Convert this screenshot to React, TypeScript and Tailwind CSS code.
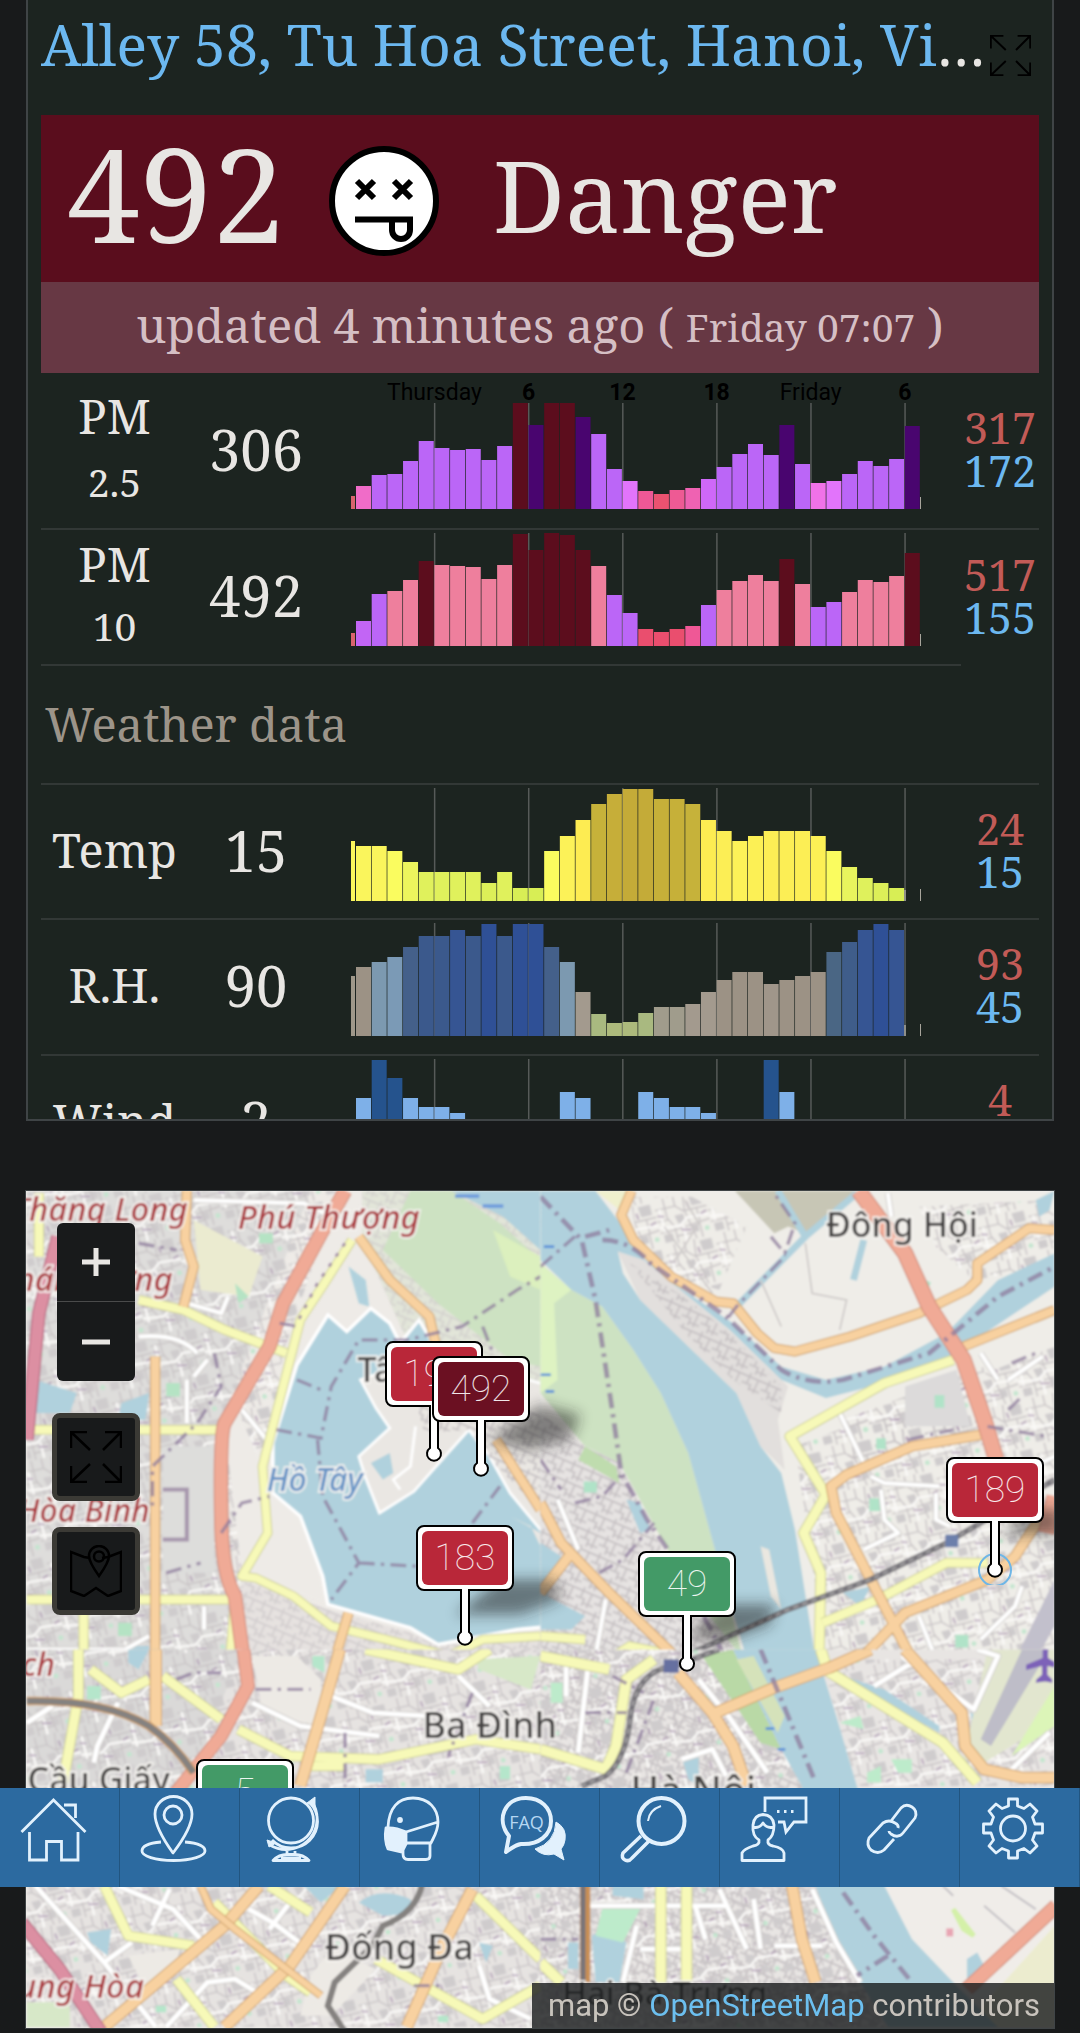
import type { ReactNode } from "react";

type Bar = [number, string];

const PU = "#bb66f7";
const IN = "#49056f";
const MA = "#5c0d1d";
const PI = "#ee7f9d";

const pm25: Bar[] = [
  [23, "#f06cc8"], [34, PU], [35, PU], [48, PU], [68, PU], [61, PU], [59, PU], [60, PU], [49, PU], [63, PU],
  [106, MA], [84, IN], [106, MA], [106, MA], [92, IN], [75, PU], [40, PU], [28, "#e274fb"], [18, "#ef5896"], [15, "#eb5270"],
  [19, "#ee5a94"], [21, "#ef62b2"], [30, "#cf68f8"], [42, PU], [55, PU], [65, PU], [54, PU], [84, IN], [45, PU], [26, "#f072e8"],
  [28, "#e274fb"], [35, PU], [48, PU], [43, PU], [50, PU], [83, IN],
];
const pm10: Bar[] = [
  [25, "#c265f5"], [52, PU], [55, PI], [66, PI], [85, MA], [81, PI], [80, PI], [79, PI], [67, PI], [81, PI],
  [112, MA], [96, MA], [113, MA], [111, MA], [96, MA], [80, PI], [51, PU], [33, PU], [17, "#ea4e6e"], [14, "#ea4e6e"],
  [17, "#ea4e6e"], [20, "#ef5896"], [41, PU], [56, PI], [65, PI], [71, PI], [65, PI], [87, MA], [62, PI], [39, PU],
  [44, PU], [54, PI], [66, PI], [64, PI], [70, PI], [93, MA],
];
const temp: Bar[] = [
  [55, "#faf55c"], [55, "#faf55c"], [50, "#fafc5f"], [39, "#ecf55d"], [29, "#e0f15c"], [29, "#e0f15c"], [29, "#e0f15c"], [29, "#e0f15c"], [18, "#dcef58"], [29, "#e0f15c"],
  [13, "#d8ee55"], [13, "#d8ee55"], [50, "#fafc5f"], [65, "#fcf258"], [81, "#fdec52"], [97, "#c6b23a"], [107, "#c6ae39"], [112, "#c4ab38"], [112, "#c4ab38"], [102, "#c6b039"],
  [102, "#c6b039"], [97, "#c6b23a"], [81, "#fdec52"], [70, "#fcee55"], [60, "#fcf258"], [65, "#fcf055"], [70, "#fcee55"], [70, "#fcee55"], [70, "#fcee55"], [65, "#fcf055"],
  [50, "#fafc5f"], [34, "#e8f45d"], [23, "#dff15c"], [18, "#dcef58"], [13, "#d8ee55"],
];
const rh: Bar[] = [
  [69, "#9c9285"], [74, "#7c99b0"], [79, "#7b9ab6"], [89, "#44608a"], [100, "#3b598c"], [100, "#3b598c"], [106, "#365593"], [100, "#3b598c"], [112, "#2f5096"], [100, "#3b598c"],
  [112, "#2f5096"], [112, "#2f5096"], [89, "#44608a"], [74, "#7c99b0"], [44, "#a39a8e"], [22, "#a9b980"], [13, "#adba7c"], [14, "#adba7c"], [23, "#a9b980"], [29, "#a09c8c"],
  [29, "#a09c8c"], [32, "#a39a8e"], [44, "#a39a8e"], [56, "#9c9285"], [64, "#9c9285"], [64, "#9c9285"], [52, "#a0968a"], [56, "#9c9285"], [60, "#9c9285"], [64, "#9c9285"],
  [84, "#4a6684"], [94, "#3f5d8a"], [106, "#365593"], [112, "#2f5096"], [106, "#365593"],
];
const LB = "#7eb0e8";
const DB = "#25538d";
const N: Bar = [0, LB];
const wind: Bar[] = [
  [74, LB], [112, DB], [94, DB], [74, LB], [65, LB], [65, LB], [59, LB], N, N, N, N, N, N, [80, LB], [74, LB], N, N, N,
  [80, LB], [74, LB], [65, LB], [65, LB], [59, LB], N, N, N, [112, DB], [80, LB],
];

const axis: [number, string][] = [[5, "Thursday"], [11, "6"], [17, "12"], [23, "18"], [29, "Friday"], [35, "6"]];

function Chart({ bars, lead, labels = false }: { bars: Bar[]; lead?: Bar; labels?: boolean }) {
  const h = labels ? 133 : 113;
  const top = labels ? 27 : 0;
  return (
    <svg viewBox={`0 0 570 ${h}`} className="block h-auto w-full" aria-hidden="true">
      {axis.map(([k, t]) => (
        <g key={k}>
          <rect x={4.5 + k * 15.68} y={top} width="1.5" height={h - top} fill="#565a58" />
          {labels && (
            <text
              x={5 + k * 15.68}
              y="24"
              textAnchor="middle"
              className="font-['Roboto'] text-[23px]"
              fontWeight={t.length > 2 ? 400 : 700}
              fill="#000"
            >
              {t}
            </text>
          )}
        </g>
      ))}
      {lead && <rect x="0" y={h - lead[0]} width="4" height={lead[0]} fill={lead[1]} />}
      {bars.map(([v, c], i) => (
        <rect key={i} x={5 + i * 15.68} y={h - v} width="15" height={v} fill={c} />
      ))}
      <rect x="569" y={h - 12} width="1" height="12" fill="#a8a59c" />
      {bars.length === 35 && <rect x="553" y={h - 11} width="2" height="11" fill="#8f8f89" />}
    </svg>
  );
}

type RowProps = {
  label: string;
  sub?: string;
  value: string;
  bars: Bar[];
  lead?: Bar;
  max: string;
  min: string;
  height: string;
  labels?: boolean;
  shortRule?: boolean;
};

function Row({ label, sub, value, bars, lead, max, min, height, labels, shortRule }: RowProps) {
  const b = "border-b-2 border-[#323836]";
  return (
    <tr className={height}>
      <th scope="row" className={`${b} px-0 pt-0 pb-1 text-center align-middle text-[47px] leading-[62px] font-normal`}>
        {label}
        {sub && <div className={labels ? "pt-1 text-[39px]" : "text-[39px]"}>{sub}</div>}
      </th>
      <td className={`${b} px-0 pt-0 pb-1 text-center align-middle text-[56px]`}>{value}</td>
      <td className={`${b} pt-[3px] pr-10 pb-0 pl-[27px] align-top`}>
        <Chart bars={bars} lead={lead} labels={labels} />
      </td>
      <td className={`${shortRule ? "" : b} px-0 pt-0 pb-1 text-center align-middle text-[43px] leading-[43px]`}>
        <div className="text-[#c25b57]">{max}</div>
        <div className="text-[#6cb8f0]">{min}</div>
      </td>
    </tr>
  );
}

function ExpandIcon({ className }: { className: string }) {
  return (
    <svg viewBox="0 0 52 52" className={className} fill="none" stroke="#000" strokeWidth="2.5" aria-hidden="true">
      <path d="M1 17V1H17M1 1L20 19M35 1H51V17M51 1L33 19M1 35V51H17M1 51L20 33M35 51H51V35M51 51L33 33" />
    </svg>
  );
}

function Face() {
  return (
    <svg viewBox="0 0 110 110" className="mt-1 size-[110px] shrink-0" aria-label="Face with crossed eyes" role="img">
      <circle cx="55" cy="55" r="52" fill="#fff" stroke="#000" strokeWidth="6" />
      <g fill="none" stroke="#000" strokeWidth="6">
        <path d="M28 35L45 52M45 35L28 52M65 35L82 52M82 35L65 52" />
        <path d="M26 73.500H81V84A9 9 0 0 1 63 84V75" />
      </g>
    </svg>
  );
}

/* ---------- Map drawing ---------- */

type Kind = "orange" | "yellow" | "red" | "pink" | "white";

const roadColors: Record<Kind, [string, string]> = {
  orange: ["#cfa36b", "#f8d1a0"],
  yellow: ["#cfd199", "#f7f9b8"],
  red: ["#d08a78", "#f0aa96"],
  pink: ["#b0607a", "#dc8fa2"],
  white: ["#d2cfcc", "#ffffff"],
};

function Roads({ kind, w, d }: { kind: Kind; w: number; d: string }) {
  const [edge, fill] = roadColors[kind];
  return (
    <g fill="none" strokeLinejoin="round" strokeLinecap="butt">
      <path d={d} stroke={edge} strokeWidth={w + 6} />
      <path d={d} stroke={fill} strokeWidth={w} />
    </g>
  );
}

function Boundary({ d, w = 10 }: { d: string; w?: number }) {
  return <path d={d} fill="none" stroke="#8d7b9c" strokeOpacity="0.75" strokeWidth={w} strokeDasharray="46 18 10 18" />;
}

function Rail({ d }: { d: string }) {
  return (
    <g fill="none">
      <path d={d} stroke="#77757a" strokeWidth="16" />
      <path d={d} stroke="#a9a7a8" strokeWidth="5" strokeDasharray="16 12" />
    </g>
  );
}

type PlaceProps = { x: number; y: number; size: number; fill?: string; italic?: boolean; end?: boolean; children: ReactNode };

function Place({ x, y, size, fill = "#444242", italic = false, end = false, children }: PlaceProps) {
  return (
    <text
      x={x}
      y={y}
      fontSize={size}
      fill={fill}
      fontStyle={italic ? "italic" : "normal"}
      fontWeight="500"
      textAnchor={end ? "end" : "start"}
      stroke="#f6f3f0"
      strokeOpacity="0.85"
      strokeWidth="4"
      paintOrder="stroke"
      className="font-['Noto_Sans']"
    >
      {children}
    </text>
  );
}

const water = "#b0d1dd";

function MapDrawing() {
  return (
    <svg viewBox="25 1191 1030 838" preserveAspectRatio="xMinYMin slice" className="absolute inset-0 h-full w-full" aria-hidden="true">
      <defs>
        <pattern id="streets" width="150" height="140" patternUnits="userSpaceOnUse" patternTransform="rotate(-14)">
          <path d="M52 58H78V84H58ZM104 8H140V40H108ZM8 108H34V132H8ZM92 98H112V120H92Z" fill="#cfcccd" />
          <path d="M0 30H60L80 50H150M30 0V60L45 90V140M90 0L84 50L100 140M0 100H45L150 90M120 50V90M60 30V0M0 66H34M118 92V140M45 120H98" stroke="#c8c3c5" strokeWidth="4" fill="none" />
          <path d="M0 84L60 92L86 72L150 76M70 92V140M14 30V100" stroke="#fbfaf8" strokeWidth="7" fill="none" />
          <path d="M4 48L22 54M62 104L90 110M128 70L146 64M96 26L98 44" stroke="#a791ad" strokeWidth="6" strokeOpacity="0.7" />
          <circle cx="136" cy="116" r="7" fill="#c3e6cf" />
        </pattern>
        <pattern id="dense" width="60" height="56" patternUnits="userSpaceOnUse" patternTransform="rotate(24)">
          <path d="M0 12H60M0 34H28V56M16 0V34M44 12V56M28 46H60" stroke="#c6c1c3" strokeWidth="5" fill="none" />
        </pattern>
        <filter id="soft" x="-20%" y="-20%" width="140%" height="140%">
          <feGaussianBlur stdDeviation="1" />
        </filter>
        <filter id="shade" x="-50%" y="-100%" width="200%" height="300%">
          <feGaussianBlur stdDeviation="7" />
        </filter>
        <clipPath id="north"><rect x="0" y="30" width="1569" height="1412" /></clipPath>
        <clipPath id="south"><rect x="0" y="0" width="1569" height="1149" /></clipPath>
      </defs>

      <rect x="0" y="1180" width="1080" height="860" fill="#eeebe7" />
      <g filter="url(#soft)">
        {/* north west */}
        <g transform="translate(0 1180) scale(0.3444 0.3333)" clipPath="url(#north)">
          <path d="M75 32H900L640 730L700 1440H75Z" fill="#dedddb" />
          <path d="M620 32L980 32L820 520L780 800L700 1200L960 1440H75V32Z" fill="url(#streets)" />
          <path d="M690 700L780 900L900 1010L940 1270L700 1180L650 740Z" fill="#eeebe7" />
          <path d="M470 800H620V1180H470Z" fill="#dddddb" />
          <path d="M560 120L760 230L720 350L580 330Z" fill="#ebebd0" />
          <path d="M1050 32H1568V760H1300L1050 180Z" fill="#e2e5d9" />
          <path d="M1050 32H1568V760H1300L1050 180Z" fill="url(#dense)" opacity="0.5" />
          <path d="M1190 32H1310L1450 130L1568 240V560L1480 540L1270 370L1110 210Z" fill="#cde2c2" />
          <path d="M1430 150L1568 230V330L1480 290Z" fill="#dcf0be" />
          <path d="M1310 32H1568V210L1460 110Z" fill={water} />
          <path d="M100 600L220 640L200 700H100ZM350 670L430 640L420 720H340ZM370 1400H430V1440H370ZM1010 260L1060 300L1070 380L1040 370Z" fill={water} />
          <path d="M680 310L720 350L690 370ZM480 610H520V650H480ZM340 1330H380V1370H340ZM750 160H790V190H750Z" fill="#b5e3c4" />
          <path d="M950 405L1005 455L1075 385L1130 430L1160 490L1215 420L1250 480L1200 620L1600 660V1340L1500 1350L1270 1395L1190 1345L950 1275L935 1190L870 1010L790 940V790L860 555Z" fill={water} stroke="#fff" strokeWidth="10" />
          <path d="M1045 600L1260 520L1600 620V1090L1480 940L1420 830L1360 750L1290 830L1200 935L1100 1000L1060 895L1040 830L1130 745L1090 685Z" fill="#eae7e3" stroke="#fff" strokeWidth="8" />
          <path d="M1200 640L1568 700V990L1440 860L1360 750L1230 760Z" fill="url(#dense)" />
          <path d="M1075 850L1130 820L1140 880L1110 900Z" fill={water} />
          <path d="M1205 740L1190 860L1140 900L1160 930" fill="none" stroke="#fff" strokeWidth="8" />
          <path d="M1480 1010L1540 1040L1568 1100V1060Z" fill="#eae7e3" />
          <path d="M700 1200L950 1290L1190 1360L1270 1400L1568 1360V1440H700Z" fill="#e6e2e0" />
          <path d="M700 1200L950 1290L1190 1360L1270 1400L1568 1360V1440H700Z" fill="url(#dense)" opacity="0.6" />
          <Roads kind="white" w={12} d="M540 370L640 400L660 350M400 470Q520 460 570 520M540 600V730M700 690L780 790M560 60L880 70L1000 130M600 540L560 590M590 1280V1350M75 1410H360L430 1370" />
          <Roads kind="yellow" w={24} d="M400 360L530 390L650 450L830 520M75 750H640M75 1260H680M240 1300V1440M110 40V230" />
          <Roads kind="yellow" w={22} d="M1020 180L940 310L870 420L820 620L760 860L775 1060L700 1190L740 1195L850 1250L960 1340L1120 1380L1300 1430L1400 1380L1568 1370M680 1260L665 1440" />
          <path d="M1000 190L920 310L860 430" stroke="#a08aa5" strokeWidth="8" strokeDasharray="12 24" fill="none" />
          <Roads kind="orange" w={24} d="M540 32L535 180L560 260L530 380M448 530V1440M1040 170L1130 300L1245 410L1265 500M1440 780L1500 880L1568 990M1010 1300L970 1440" />
          <Roads kind="red" w={36} d="M1000 32L930 160L820 370L780 500L650 730Q636 760 640 1000Q640 1180 680 1250L705 1440" />
          <Roads kind="pink" w={34} d="M165 170L110 400L75 780" />
          <Boundary d="M810 430L860 440M800 750L930 775L960 620L1040 480L1180 480L1340 440L1500 330L1568 290M860 600L930 630M920 780L935 950L1040 1150L960 1260M1040 1150L1210 1160M400 190L510 210M480 1180L580 1150M640 1060L700 970L780 950M620 520L640 620L570 730L440 860V980M1370 1030L1450 920M1400 440L1430 520" />
          <path d="M470 930H540V1080H470" fill="none" stroke="#a797ad" strokeWidth="12" />
          <path d="M1320 48H1390M1400 78H1460" stroke="#6d9bdc" strokeWidth="10" />
        </g>

        {/* north east */}
        <g transform="translate(540 1180) scale(0.3444 0.3333)" clipPath="url(#north)">
          <path d="M0 32H1495V1440H0Z" fill="#efede8" />
          <path d="M260 50H440L600 140L520 330L380 290L280 170ZM1100 80L1495 60V260L1260 300L1150 200ZM880 720L1290 560V740L900 870Z" fill="url(#streets)" />
          <path d="M740 800L1495 500V1440H830Z" fill="url(#streets)" />
          <path d="M1060 620L1210 570L1250 740H1060Z" fill="#dcdada" />
          <path d="M0 250L90 330L180 380L270 510L350 640L430 820L510 1120L590 1440H480L370 1110L230 850L130 800L0 640Z" fill="#cde2c2" />
          <path d="M0 250L90 330L40 370L50 600L0 640Z" fill="#def3c2" />
          <path d="M0 700L130 800L230 850L310 1020L380 1160L590 1440H0Z" fill="#e6e3e2" />
          <path d="M0 700L130 800L230 850L310 1020L380 1160L590 1440H0Z" fill="url(#dense)" />
          <path d="M130 800L220 860L230 910L110 840Z" fill="#bfdcae" />
          <path d="M0 32H160L225 120L300 235L400 320L560 430L700 560L830 600L1000 560L1180 460L1330 300L1495 220V320L1190 530L1000 610L830 655L700 600L550 450L430 350L300 240L225 215L240 280L290 360L440 510L570 640L640 800L700 880L740 1050L800 1440H600L510 1120L430 820L350 640L270 510L180 380L90 330L0 240Z" fill={water} />
          <path d="M225 215L300 240L430 350L550 450L720 620L690 720L710 870L640 800L570 640L440 510L290 360Z" fill="#e2dfdd" />
          <path d="M260 250L430 360L560 470L700 620V700L560 600L430 470Z" fill="url(#dense)" />
          <path d="M640 1100L665 1110L700 1290L670 1250Z" fill="#eae7e0" />
          <path d="M0 1090L60 1130L20 1250L130 1310L90 1350H0ZM250 960L290 970L320 1050L290 1060ZM1440 60L1495 32L1480 90L1450 110ZM880 1240L960 1220L930 1280Z" fill={water} />
          <path d="M565 32H920L770 160L720 140L680 160Z" fill="#c7c6b5" />
          <path d="M160 32H260L230 90Z" fill="#eff0cd" />
          <path d="M770 170L920 40M770 170L570 380M690 32L770 170M940 180L910 300" stroke={water} strokeWidth="20" fill="none" />
          <path d="M1110 300L1130 310L1120 330ZM1150 650H1170V680H1150ZM980 780H1000V805H980ZM960 960H985V990H960ZM130 910H160V935H130ZM1210 1370H1240V1400H1210Z" fill="#b0e3c8" stroke="#b0e3c8" strokeWidth="8" />
          <path d="M360 140L500 340M420 60L460 130L400 230L380 250M770 190L790 340L890 360L870 450M640 300L700 440" stroke="#cfcbca" strokeWidth="5" fill="none" />
          <Roads kind="white" w={12} d="M870 700L940 850M960 890L1000 910L1160 920M990 930L1000 1020L1040 1060L940 1110M1150 940V1020L1190 1040M1280 520L1330 600M1360 600L1460 530M50 960L110 1110M190 1260L160 1430M1400 1220L1380 1280L1280 1380M1100 1310L1150 1440M1010 40L1020 110M1060 200L1090 260M1390 880L1495 830" />
          <Roads kind="yellow" w={26} d="M1200 540L1000 610L725 770L830 945L765 1060L815 1180L810 1440" />
          <Roads kind="yellow" w={24} d="M820 1330L980 1260L1180 1150H1300M0 1370L130 1380M200 1440L260 1400L400 1430" />
          <Roads kind="orange" w={24} d="M265 32L235 105L270 180L380 290L510 365L560 370L630 460L680 505L740 515L900 470L1100 400L1240 330L1270 300V250L1420 145L1495 150M1495 390L1230 500" />
          <Roads kind="orange" w={26} d="M1280 765L1080 800L890 885L845 920L860 1000L980 1240L1080 1440M1495 960L1430 1050L1380 1130L1300 1200L1060 1300L930 1440M0 970L60 1090L200 1240L400 1440M0 1240L90 1120" />
          <Roads kind="red" w={42} d="M925 32L1060 220L1130 380L1230 540L1290 720L1325 840M1495 950L1470 1060" />
          <Boundary w={14} d="M0 50L120 180L160 360L210 700L235 880L310 1020L370 1110L490 1340L540 1440" />
          <Boundary w={14} d="M130 170L200 150M180 180Q260 180 320 250L540 410L700 570Q780 620 880 600L1130 520L1330 350L1495 260" />
          <Boundary d="M0 260L100 170M700 240L570 380L540 420M670 170L710 220L740 130L680 40M100 970L180 950L240 880M170 1180L240 1140L330 1030M0 840L60 930M1360 690L1400 650M1370 550L1440 520M1070 780L1200 750M1300 740L1470 770" />
          <Rail d="M430 1425L720 1290L960 1200L1180 1090L1495 900" />
          <rect x="1177" y="1065" width="38" height="38" fill="#6c7fab" />
          <path d="M1495 1200L1380 1440H1440L1495 1340Z" fill="#c2c0cc" />
          <path d="M10 200H40M0 585H30M15 635H40" stroke="#5b93d8" strokeWidth="8" />
        </g>

        {/* south west */}
        <g transform="translate(0 1650) scale(0.3444 0.3333)" clipPath="url(#south)">
          <path d="M75 0H1568V1134H75Z" fill="#e6e3e1" />
          <path d="M75 0H700L560 370L300 410H75Z" fill="#dad9d8" />
          <path d="M75 0H1568V1134H75Z" fill="url(#streets)" />
          <path d="M370 920L520 900L500 980L430 1040ZM900 980L960 900L1090 960L960 1100H870ZM730 20H860L930 90V230L760 190Z" fill="#edeae5" />
          <path d="M370 0H430L400 60L370 40ZM880 710H990L930 760ZM1040 760Q1100 710 1190 750Q1200 800 1110 800ZM250 850L320 840L310 920L260 880ZM1390 880L1430 890L1410 940ZM1060 360H1110V400H1060Z" fill={water} />
          <path d="M75 1060H200V1134H75ZM1380 30L1568 20L1540 120L1390 60Z" fill="#d7e8c8" />
          <path d="M905 20H940V70L905 50ZM250 110H290V150H250ZM1450 350H1480V390H1450ZM1270 1100H1300V1120H1270ZM450 1070H480V1090H450Z" fill="#b5e6cb" />
          <Roads kind="white" w={14} d="M100 710L300 940L450 1134M300 940L380 880M75 220L150 170M340 160L280 290L270 340M730 160L870 230L1100 260M960 140L1080 190L1240 200M1330 80L1420 170M340 710L500 780L580 870M490 720L440 830M720 780L790 820L880 890M840 760L780 840M480 1134L600 1000L680 990L760 1040M1390 950L1420 1050L1540 1110" />
          <Roads kind="yellow" w={26} d="M225 0V140L180 400M260 60L350 130L430 90M470 80L640 210M690 240L840 320L1100 330L1380 270L1568 300M900 350H1000M1060 0L1330 60L1420 0" />
          <Roads kind="yellow" w={26} d="M300 710L370 860L560 890M510 990L620 1134M620 760L830 980L900 1030M1380 740L1568 930M1090 930L1400 1110L1568 1010M780 710L900 790" />
          <Roads kind="orange" w={30} d="M450 0V230M985 0L930 200L870 410M750 710L650 830L300 1134M1000 710L840 950L650 1134M1370 720L1280 900L1180 1134" />
          <Roads kind="orange" w={18} d="M580 710L610 780L680 840L830 960L930 1040" />
          <Roads kind="red" w={34} d="M705 0L718 110L640 260L500 440" />
          <Roads kind="pink" w={34} d="M60 820L170 960L290 1149" />
          <path d="M75 155Q300 150 430 230Q500 280 560 370" fill="none" stroke="#d0a06c" strokeWidth="26" />
          <path d="M75 155Q300 150 430 230Q500 280 560 370M1225 700Q1210 790 1110 830L1080 890L970 1000L950 1070L1000 1149" fill="none" stroke="#858280" strokeWidth="18" />
          <Boundary d="M510 90L560 70H640M740 120H900M1000 250V410M1200 1010H1290M1370 130L1300 320" />
        </g>

        {/* south east */}
        <g transform="translate(540 1650) scale(0.3444 0.3333)" clipPath="url(#south)">
          <path d="M0 0H1495V1134H0Z" fill="#e8e5e3" />
          <path d="M0 0H560L760 410L800 710L1000 1134H0Z" fill="url(#dense)" />
          <path d="M0 0H560L760 410L800 710L1000 1134H0Z" fill="url(#streets)" />
          <path d="M820 30H1495V410H910Z" fill="url(#streets)" />
          <path d="M990 700H1495V1134H1240L1060 870Z" fill="#f0ede9" />
          <path d="M1495 830V1134H1230Z" fill="#ececcf" />
          <path d="M470 20L560 0L700 300L640 280Z" fill="#b9d9a6" />
          <path d="M560 0H800L860 200L920 410L1000 710L1080 870L1200 1000L1330 1134H1010L930 1000L850 850L800 710L760 410L700 300Z" fill={water} />
          <path d="M570 30L620 20L710 200L690 250Z" fill="#d5e2ba" />
          <path d="M410 320H460V410L430 390ZM210 710H300V750L210 740ZM80 880H110V960H80ZM150 860Q190 830 250 880L230 1000H160ZM880 80L1000 120L1160 230V250L1000 160ZM1240 930L1270 910L1290 950L1240 1000ZM1250 190L1280 200L1270 290Z" fill={water} />
          <path d="M180 780H290L240 880L160 860ZM30 100H65V160H30ZM950 370L990 350V400H950ZM1020 330H1080V370H1040ZM870 220L930 200L940 240Z" fill="#bdebcb" />
          <path d="M1440 0H1300L1230 330L1290 340L1495 210V0Z" fill="#e2e6cf" />
          <path d="M1400 0H1480L1310 290L1280 270Z" fill="#bebdc8" />
          <path d="M1495 110V230L1370 320Z" fill="#dcf5b8" />
          <path d="M1200 780L1260 860L1230 840Z" fill="#d4f0a8" stroke="#d4f0a8" strokeWidth="14" />
          <path d="M1290 770L1380 850M1340 710L1440 780M1170 710L1200 740" stroke="#c5c2c6" strokeWidth="6" />
          <path d="M1180 850H1200" stroke="#e8a5b3" strokeWidth="24" />
          <Roads kind="white" w={14} d="M130 770H540M450 770L480 870M520 720L600 900M620 750L640 900M290 900H410M280 830L240 1000M790 720L860 880L930 1000M680 890H820M970 110L1080 40M1050 20L1260 180L1330 20L1270 0M460 90L530 180M410 330L500 300L540 380M75 20V140M140 40L110 310M1370 360L1480 250M540 190L660 370" />
          <Roads kind="yellow" w={28} d="M815 0L835 65L1170 280L1270 400M0 20L200 60M0 300L190 360L220 290L250 90L330 30M350 710V1000M425 710V1000M0 940L60 1000" />
          <Roads kind="orange" w={30} d="M400 70L500 190L560 290L600 410M510 190L680 115L840 55L960 0M1060 0L1225 190L1235 290L1290 360L1400 385H1495M730 700L760 870L800 1000" />
          <Roads kind="red" w={38} d="M1500 770L1240 1020" />
          <Boundary w={14} d="M640 0L700 150L760 300L800 400M880 730L970 860L1080 1000M1010 920L920 980" />
          <Boundary d="M250 370L330 150M210 80L300 130M130 190H250M0 870H110" />
          <Rail d="M520 0Q440 30 390 50Q280 60 262 200Q250 330 190 380L120 410" />
          <path d="M130 700V1000" stroke="#c98f55" strokeWidth="30" />
          <path d="M124 700V1000" stroke="#77757a" strokeWidth="14" />
          <rect x="358" y="30" width="44" height="40" fill="#6670a0" />
          <path d="M1460 -20H1476V26L1495 38V54L1474 50V76L1488 90V100L1467 96L1440 100L1442 90L1458 76V50L1412 62V46L1460 26Z" fill="#7d62b8" />
          <path d="M655 238H680M690 300H712" stroke="#5b93d8" strokeWidth="8" />
        </g>

        <Place x={187} y={1221} size={33} fill="#ab3a3f" italic end>Thăng Long</Place>
        <Place x={237} y={1229} size={33} fill="#ab3a3f" italic>Phú Thượng</Place>
        <Place x={172} y={1291} size={33} fill="#ab3a3f" italic end>hái Dương</Place>
        <Place x={149} y={1522} size={32} fill="#ab3a3f" italic end>Hòa Bình</Place>
        <Place x={54} y={1677} size={32} fill="#ab3a3f" italic end>ịch</Place>
        <Place x={143} y={1999} size={33} fill="#ab3a3f" italic end>Trung Hòa</Place>
        <Place x={266} y={1491} size={32} fill="#6794c6" italic>Hồ Tây</Place>
        <Place x={357} y={1382} size={34}>Tây Hồ</Place>
        <Place x={826} y={1237} size={34}>Đông Hội</Place>
        <Place x={422} y={1739} size={36}>Ba Đình</Place>
        <Place x={169} y={1793} size={34} end>Cầu Giấy</Place>
        <Place x={324} y={1961} size={36}>Đống Đa</Place>
        <Place x={630} y={1806} size={39}>Hà Nội</Place>
        <Place x={562} y={2006} size={33}>Hai Bà Trưng</Place>
      </g>
      <g fill="#1a1a1a" opacity="0.5" filter="url(#shade)">
        <path d="M488 1440L540 1405L580 1415L570 1440L530 1450Z" />
        <path d="M455 1615L500 1580H555L560 1600L520 1615Z" />
        <path d="M685 1640L720 1605H775L770 1625L730 1640Z" />
        <path d="M1000 1535L1030 1510H1060V1535Z" />
      </g>
    </svg>
  );
}

type PinProps = { place: string; value: string; color: string; ring?: boolean };

function Pin({ place, value, color, ring }: PinProps) {
  return (
    <button type="button" aria-label={`Air quality ${value}`} className={`absolute flex w-[98px] flex-col items-center ${place}`}>
      <span className="flex h-[66px] w-full items-center justify-center rounded-[8px] border-2 border-black bg-white p-[4px]">
        <span className={`flex h-full w-full items-center justify-center rounded-[6px] font-['Roboto'] text-[37px] font-thin text-white/90 ${color}`}>
          {value}
        </span>
      </span>
      <svg viewBox="0 0 40 64" className="-mt-[2px] h-[64px] w-[40px]" aria-hidden="true">
        {ring && <circle cx="20" cy="49" r="16" fill="none" stroke="#6fb6e6" strokeWidth="2" />}
        <path d="M16 0V43A7 7 0 1 0 24 43V0" fill="#fff" stroke="#000" strokeWidth="2" />
      </svg>
    </button>
  );
}

/* ---------- Navigation ---------- */

const navItems: { name: string; icon: ReactNode }[] = [
  { name: "Home", icon: <path d="M.5 36L32.500 4L64.500 36M43 9H54.500V22M8.500 36V64H25.500V45.500H40.500V64H57V36" strokeLinejoin="miter" /> },
  {
    name: "Nearby",
    icon: (
      <>
        <circle cx="32" cy="19" r="9" />
        <path d="M32 57Q14 32 14 18A18.500 17.500 0 0 1 51 18Q51 32 32 57Z" />
        <path d="M20 46C8 47 1 50 1 55C1 60 14 64.500 32.500 64.500S64 60 64 55C64 50 56 47 44 46" />
      </>
    ),
  },
  {
    name: "World",
    icon: (
      <>
        <circle cx="30" cy="24.500" r="22.500" />
        <path d="M49 7A26 26 0 0 1 11 44M53 9A31 31 0 0 1 9 49" />
        <path d="M46 7L54 1L54 10ZM6 44L15 47L8 51Z" fill="currentColor" strokeWidth="1" />
        <path d="M26 55V59M34 55V59M12 64.500Q18 58.500 26 58.500H34Q42 58.500 48 64.500ZM20 62H40" />
      </>
    ),
  },
  {
    name: "Masks",
    icon: (
      <>
        <path d="M7 31C8 12 17 2 32 2C48 2 57 13 57 26C57 36 52 42 49.500 48M25 36L57 26" />
        <path d="M22 47H49V60Q49 63.500 45 63.500H27Q22 63.500 22 58Z" />
        <path d="M5 32Q14 31 25 36V48Q23 53 20 56L7 53Q3 44 5 32Z" fill="currentColor" />
        <circle cx="19" cy="24" r="1.500" fill="currentColor" />
      </>
    ),
  },
  {
    name: "Frequently asked questions",
    icon: (
      <>
        <path d="M5 56L8 40C-5 24 3 2 25 2C40 2 50 12 50 25C50 39 38 49 20 48Q14 49 5 56Z" strokeWidth="4" />
        <path d="M55 26Q66 32 64 44Q63 50 60 53L63 64Q58 61 53 58Q42 61 34 53Q54 47 55 26Z" fill="currentColor" strokeWidth="1" />
        <text x="25.500" y="33" textAnchor="middle" fontSize="18" fill="#b5d6f2" stroke="none" className="font-['Open_Sans']">FAQ</text>
      </>
    ),
  },
  {
    name: "Search",
    icon: (
      <>
        <circle cx="40.500" cy="25" r="23" strokeWidth="4" />
        <path d="M20 40L2 57Q0 62 4 64Q8 66 11 62L28 45" strokeWidth="3.500" />
        <path d="M27 25Q28 14 40 10" strokeWidth="2" />
      </>
    ),
  },
  {
    name: "Contact",
    icon: (
      <>
        <path d="M24 16V2H65V26H53L45 36L43 26H37" strokeLinejoin="miter" />
        <path d="M1 64.500V57Q3 53 12 50Q19 49 18 44Q11 40 12 29Q13 19 22 18.500Q32 19 33 29Q33 40 27 44Q26 49 32 50Q42 52 43 57V64.500ZM12 31Q18 33 22 27Q26 33 33 31" />
        <path d="M36 15.500H38.500M43 15.500H45.500M50 15.500H52.500" />
      </>
    ),
  },
  {
    name: "Links",
    icon: (
      <path d="M30 25L40 12Q45 7 51 11Q57 15 54 22L42 37Q37 43 30 38Q28 37 28 35M33 43L23 54Q17 59 10 54Q5 49 8 42L22 27Q28 23 34 27Q38 29 37 32" />
    ),
  },
  {
    name: "Settings",
    icon: (
      <>
        <circle cx="32" cy="32.500" r="12.500" />
        <path d="M27.500 10V3H36.500V10L43 12.500L49 8L56 15L51.500 21L54 28H61.500V37H54L51.500 44L56 50L49 57L43 52.500L36.500 55V62H27.500V55L21 52.500L15 57L8 50L12.500 44L10 37H2.500V28H10L12.500 21L8 15L15 8L21 12.500Z" />
      </>
    ),
  },
];

export default function App() {
  return (
    <div className="min-h-screen bg-[#181a1b] px-[26px] pb-1 font-['Noto_Serif','DejaVu_Serif',serif] text-[#e8e6e3]">
      <section className="h-[1121px] overflow-hidden border-x-2 border-b-2 border-[#3f4446] bg-[#1c2420] px-[13px]">
        <header className="flex h-[115px] items-start justify-between">
          <h1 className="min-w-0 truncate pt-[6px] text-[57px] leading-[76px]">
            <a href="#station" className="text-[#6cb8f0]">Alley 58, Tu Hoa Street, Hanoi, Vietnam</a>
          </h1>
          <button type="button" aria-label="Expand" className="mt-[35px] mr-2 ml-1 shrink-0">
            <ExpandIcon className="size-[41px]" />
          </button>
        </header>
        <div className="flex h-[167px] items-center bg-[#5a0d1d] pl-[26px]">
          <span className="w-[262px] shrink-0 pb-3 text-[130px] leading-none">492</span>
          <Face />
          <span className="pb-2 pl-[54px] text-[99px] leading-none">Danger</span>
        </div>
        <div className="flex h-[91px] items-center justify-center gap-3 bg-[#673844] pb-1 text-[47px] whitespace-nowrap text-[#d5bfc4]">
          <span>updated 4 minutes ago (</span>
          <span className="pt-1 text-[39px]">Friday 07:07</span>
          <span>)</span>
        </div>
        <table className="w-full table-fixed border-separate border-spacing-0">
          <colgroup>
            <col className="w-[147px]" />
            <col className="w-[136px]" />
            <col />
            <col className="w-[78px]" />
          </colgroup>
          <tbody>
            <Row label="PM" sub="2.5" value="306" bars={pm25} lead={[13, "#d9636d"]} max="317" min="172" height="h-[157px]" labels />
            <Row label="PM" sub="10" value="492" bars={pm10} lead={[13, "#d9636d"]} max="517" min="155" height="h-[136px]" shortRule />
            <tr className="h-[119px]">
              <th colSpan={4} scope="colgroup" className="border-b-2 border-[#323836] p-0 pl-1 text-left text-[47px] font-normal text-[#9c9489]">
                Weather data
              </th>
            </tr>
            <Row label="Temp" value="15" bars={temp} lead={[60, "#faf55c"]} max="24" min="15" height="h-[135px]" />
            <Row label="R.H." value="90" bars={rh} lead={[60, "#9f988a"]} max="93" min="45" height="h-[136px]" />
            <Row label="Wind" value="2" bars={wind} max="4" min="1" height="h-[136px]" />
          </tbody>
        </table>
      </section>

      <section aria-label="Map" className="relative -mx-px mt-[69px] h-[839px] overflow-hidden border border-[#3f4446] font-['Roboto']">
        <MapDrawing />
        <Pin place="left-[359px] top-[150px]" value="190" color="bg-[#b92739]" />
        <Pin place="left-[406px] top-[165px]" value="492" color="bg-[#6b1022]" />
        <Pin place="left-[390px] top-[334px]" value="183" color="bg-[#b92739]" />
        <Pin place="left-[612px] top-[360px]" value="49" color="bg-[#439a67]" />
        <Pin place="left-[920px] top-[266px]" value="189" color="bg-[#b92739]" ring />
        <Pin place="left-[170px] top-[568px]" value="5" color="bg-[#439a67]" />
        <div className="absolute top-8 left-[26px] flex flex-col items-center">
          <div className="mb-8 w-[78px] divide-y divide-[#4a4b4b] overflow-hidden rounded-[6px] bg-[#181a1b]">
            {["Zoom in", "Zoom out"].map((name, i) => (
              <button key={name} type="button" aria-label={name} className="flex h-[79px] w-full items-center justify-center">
                <svg viewBox="0 0 28 28" className="size-7" stroke="#e8e6e3" strokeWidth="5" aria-hidden="true">
                  <path d={i === 0 ? "M0 14H28M14 0V28" : "M0 14H28"} />
                </svg>
              </button>
            ))}
          </div>
          <button type="button" aria-label="Full screen" className="mb-[26px] flex size-[88px] items-center justify-center rounded-[8px] border-[5px] border-[#3b3a35] bg-[#181a1b]">
            <ExpandIcon className="size-[52px]" />
          </button>
          <button type="button" aria-label="Map layers" className="flex size-[88px] items-center justify-center rounded-[8px] border-[5px] border-[#3b3a35] bg-[#181a1b]">
            <svg viewBox="0 0 52 52" className="size-[52px]" fill="none" stroke="#000" strokeWidth="2.5" aria-hidden="true">
              <path d="M20 13L14 12L1 7V46L14 51L26 43L38 51L51 46V7L38 12L32 13" />
              <path d="M29 31Q19 17 19 11A10 10 0 0 1 39 11Q39 17 29 31Z" />
              <circle cx="29" cy="11.500" r="5" />
            </svg>
          </button>
        </div>
        <p className="absolute right-0 bottom-0 bg-[#181a1b]/80 py-[2px] pr-[14px] pl-4 text-[31px] leading-[41px] whitespace-nowrap text-[#c8c3bc]">
          map © <a href="#osm" className="text-[#6cbfef]">OpenStreetMap</a> contributors
        </p>
      </section>

      <nav aria-label="Main" className="fixed inset-x-0 bottom-[146px] grid h-[99px] grid-cols-9 bg-[#2c6aa0]">
        {navItems.map(({ name, icon }) => (
          <a key={name} href="#menu" aria-label={name} className="border-r border-[#225580] pt-2 pl-[21px] text-[#e2f1fd]">
            <svg viewBox="0 0 66 66" className="size-[66px] overflow-visible" fill="none" stroke="currentColor" strokeWidth="2.8" strokeLinejoin="round" aria-hidden="true">
              {icon}
            </svg>
          </a>
        ))}
      </nav>
    </div>
  );
}
